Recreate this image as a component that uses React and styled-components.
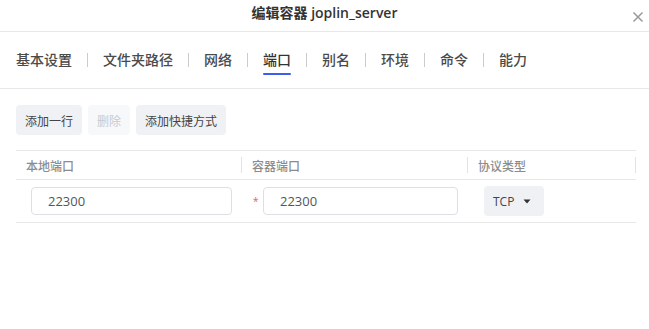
import React from "react";
import styled, { createGlobalStyle } from "styled-components";

const Global = createGlobalStyle`
  html, body { margin: 0; padding: 0; background: #fff; }
  body { font-family: "Open Sans", "Noto Sans CJK SC", sans-serif; color: #333; }
  * { box-sizing: border-box; }
`;

const Dialog = styled.div`
  width: 649px;
  height: 329px;
  background: #fff;
  display: flex;
  flex-direction: column;
`;

const Header = styled.div`
  position: relative;
  height: 32px;
  border-bottom: 1px solid #e8e8e8;
  display: flex;
  align-items: center;
  justify-content: center;
`;

const Title = styled.div`
  font-size: 14px;
  font-weight: 600;
  color: #333;
  line-height: 20px;
  margin-top: -5px;
`;

const Close = styled.button`
  position: absolute;
  right: 5px;
  top: 11px;
  width: 12px;
  height: 12px;
  padding: 0;
  border: none;
  background: none;
  display: flex;
`;

const Tabs = styled.div`
  height: 57px;
  border-bottom: 1px solid #e8e8e8;
  display: flex;
  align-items: center;
  padding: 0 16px;
`;

const Tab = styled.div`
  position: relative;
  font-size: 14px;
  font-weight: 500;
  line-height: 20px;
  color: ${(p) => (p.$active ? "#333" : "#4a4a4a")};
  &::after {
    content: "";
    display: ${(p) => (p.$active ? "block" : "none")};
    position: absolute;
    left: 0;
    right: 0;
    bottom: -5px;
    height: 2px;
    border-radius: 1px;
    background: #3d5cf0;
  }
`;

const TabSep = styled.div`
  width: 1px;
  height: 14px;
  background: #ccc;
  margin: 0 15px;
`;

const Toolbar = styled.div`
  display: flex;
  gap: 6px;
  padding: 16px 16px 0;
`;

const Button = styled.button`
  height: 30px;
  padding: 0 9px;
  border: none;
  border-radius: 4px;
  font-family: "Noto Sans CJK SC", sans-serif;
  font-size: 12px;
  background: ${(p) => (p.disabled ? "#f7f8fa" : "#f0f1f4")};
  color: ${(p) => (p.disabled ? "#c8cacf" : "#444")};
`;

const Table = styled.div`
  margin: 15px 0 0 16px;
  width: 620px;
  display: grid;
  grid-template-columns: 226px 226px 168px;
`;

const HeadCell = styled.div`
  height: 30px;
  border-top: 1px solid #e8e8e8;
  border-bottom: 1px solid #e8e8e8;
  display: flex;
  align-items: center;
  padding-left: 10px;
  position: relative;
  font-family: "Noto Sans CJK SC", sans-serif;
  font-size: 12px;
  font-weight: 500;
  color: #8c8c8c;
  &::after {
    content: "";
    position: absolute;
    right: 0;
    top: 6px;
    height: 16px;
    width: 1px;
    background: #e3e3e3;
  }
`;

const Cell = styled.div`
  height: 43px;
  border-bottom: 1px solid #e8e8e8;
  display: flex;
  align-items: center;
  padding-left: ${(p) => p.$pl}px;
  padding-right: 10px;
`;

const Required = styled.span`
  color: #ec5b6a;
  font-family: "Open Sans", sans-serif;
  font-size: 10px;
  width: 10px;
  margin-left: 1px;
  margin-right: 0;
  line-height: 1;
`;

const Input = styled.input`
  flex: 1;
  min-width: 0;
  height: 28px;
  border: 1px solid #dcdfe6;
  border-radius: 4px;
  padding: 0 16px;
  font-family: "Open Sans", sans-serif;
  font-size: 13px;
  color: #555;
  outline: none;
`;

const Select = styled.div`
  width: 60px;
  height: 30px;
  border-radius: 4px;
  background: #f0f1f4;
  display: flex;
  align-items: center;
  padding-left: 9px;
  gap: 9px;
  font-family: "Open Sans", sans-serif;
  font-size: 12px;
  color: #444;
`;

const tabs = ["基本设置", "文件夹路径", "网络", "端口", "别名", "环境", "命令", "能力"];

export default function App() {
  return (
    <Dialog>
      <Global />
      <Header>
        <Title>编辑容器 joplin_server</Title>
        <Close aria-label="close">
          <svg width="12" height="12" viewBox="0 0 12 12">
            <path d="M1.5 1.5L10.5 10.5M10.5 1.5L1.5 10.5" stroke="#9a9a9a" strokeWidth="1.5" />
          </svg>
        </Close>
      </Header>
      <Tabs>
        {tabs.map((t, i) => (
          <React.Fragment key={t}>
            {i > 0 && <TabSep />}
            <Tab $active={t === "端口"}>{t}</Tab>
          </React.Fragment>
        ))}
      </Tabs>
      <Toolbar>
        <Button>添加一行</Button>
        <Button disabled>删除</Button>
        <Button>添加快捷方式</Button>
      </Toolbar>
      <Table>
        <HeadCell>本地端口</HeadCell>
        <HeadCell>容器端口</HeadCell>
        <HeadCell>协议类型</HeadCell>
        <Cell $pl={15}>
          <Input defaultValue="22300" />
        </Cell>
        <Cell $pl={10}>
          <Required>*</Required>
          <Input defaultValue="22300" />
        </Cell>
        <Cell $pl={16}>
          <Select>
            TCP
            <svg width="8" height="5" viewBox="0 0 8 5">
              <path d="M0.5 0.5H7.5L4 4.5Z" fill="#333" />
            </svg>
          </Select>
        </Cell>
      </Table>
    </Dialog>
  );
}
